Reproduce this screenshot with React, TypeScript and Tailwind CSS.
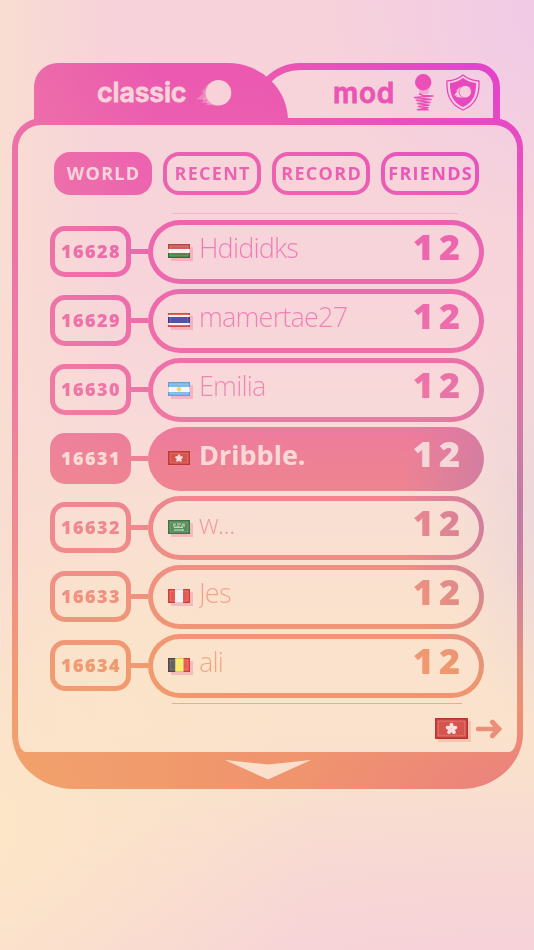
import type { ReactNode } from "react";
import { clsx } from "clsx";

// Both gradients are anchored to the viewport, so every piece of ink lines up with its neighbours.
const PAPER_VARS =
  "[--paper:radial-gradient(ellipse_250px_230px_at_106%_1%,#f0c9e8,#f4cce000),radial-gradient(ellipse_130px_240px_at_108%_54%,#e8d3dc,#f2d8da00),radial-gradient(ellipse_360px_320px_at_-8%_87%,#fde6c6,#fce2cc00),radial-gradient(ellipse_640px_230px_at_100%_106%,#f6d0db,#f7d6d800),linear-gradient(90deg,#f9ddd2,#f9dad400_20%),linear-gradient(180deg,#f7d2da,#f7d4da_30%,#f8d9d9_43%,#f9dfd2_55%,#fae2cc_66%,#fae2cc_76%,#f9dfce_84%,#f8d9d3)]";
const INK_VARS =
  "[--ink:radial-gradient(ellipse_290px_200px_at_102%_6%,#e23ed0,#ea54b400),radial-gradient(ellipse_150px_210px_at_103%_54%,#b97aac,#dc78a000),radial-gradient(ellipse_260px_230px_at_0%_84%,#f2a467,#f0986e00),radial-gradient(ellipse_240px_120px_at_100%_84%,#ea7f80,#ee8e7400),linear-gradient(90deg,#ee8c9c70,#ee809800_30%),linear-gradient(180deg,#eb58b0_6%,#ec62b0_18%,#ed69ad_31%,#ee74a6_42%,#ee8096_48%,#ef888c_55%,#f0937b_63%,#f0986e_70%,#f0946e_81%)]";

const PAPER = "bg-fixed [background-image:var(--paper)]";
const INK = "bg-fixed [background-image:var(--ink)]";
const INK_TEXT = "bg-fixed [background-image:var(--ink)] bg-clip-text text-transparent";
const OUTLINE =
  "border-transparent bg-fixed [background-image:var(--paper),var(--ink)] [background-clip:padding-box,padding-box,padding-box,padding-box,padding-box,padding-box,border-box,border-box,border-box,border-box,border-box,border-box]";

type Country = "hu" | "th" | "ar" | "hk" | "sa" | "pe" | "be";

interface Entry {
  rank: number;
  name: string;
  country: Country;
  score: number;
  me?: boolean;
}

const entries: Entry[] = [
  { rank: 16628, name: "Hdididks", country: "hu", score: 12 },
  { rank: 16629, name: "mamertae27", country: "th", score: 12 },
  { rank: 16630, name: "Emilia", country: "ar", score: 12 },
  { rank: 16631, name: "Dribble.", country: "hk", score: 12, me: true },
  { rank: 16632, name: "w...", country: "sa", score: 12 },
  { rank: 16633, name: "Jes", country: "pe", score: 12 },
  { rank: 16634, name: "ali", country: "be", score: 12 },
];

const filters = ["WORLD", "RECENT", "RECORD", "FRIENDS"];

const flagArt: Record<Country, ReactNode> = {
  hu: (
    <>
      <path fill="#c94f49" d="M0 0h22v5H0z" />
      <path fill="#f8eeee" d="M0 5h22v4H0z" />
      <path fill="#3f7a3a" d="M0 9h22v5H0z" />
    </>
  ),
  th: (
    <>
      <path fill="#e5584c" d="M0 0h22v14H0z" />
      <path fill="#fbeef0" d="M0 2h22v10H0z" />
      <path fill="#413f9c" d="M0 4h22v6H0z" />
    </>
  ),
  ar: (
    <>
      <path fill="#6db4ea" d="M0 0h22v14H0z" />
      <path fill="#f3f5fa" d="M0 5h22v5H0z" />
      <circle cx="11" cy="7.2" r="2.2" fill="#f2d552" />
    </>
  ),
  hk: (
    <>
      <path fill="#d2403a" d="M0 0h22v14H0z" />
      <g fill="#fbdedd">
        <ellipse cx="11" cy="5.1" rx="1.3" ry="1.9" />
        <ellipse cx="11" cy="5.1" rx="1.3" ry="1.9" transform="rotate(72 11 7.2)" />
        <ellipse cx="11" cy="5.1" rx="1.3" ry="1.9" transform="rotate(144 11 7.2)" />
        <ellipse cx="11" cy="5.1" rx="1.3" ry="1.9" transform="rotate(216 11 7.2)" />
        <ellipse cx="11" cy="5.1" rx="1.3" ry="1.9" transform="rotate(288 11 7.2)" />
      </g>
    </>
  ),
  sa: (
    <>
      <path fill="#48804b" d="M0 0h22v14H0z" />
      <path stroke="#c9ddc4" strokeWidth="1" fill="none" d="M5 4.2h3M9 4h4M14 4.2h3M5 6h2.5M8.5 6.2h3M13 6h4M6 7.4h9M6 10h10M14.5 9.3v1.6" />
    </>
  ),
  pe: (
    <>
      <path fill="#e0483f" d="M0 0h22v14H0z" />
      <path fill="#f7efef" d="M7 0h8v14H7z" />
    </>
  ),
  be: (
    <>
      <path fill="#55504d" d="M0 0h7.5v14H0z" />
      <path fill="#f8ec5c" d="M7.5 0h8v14h-8z" />
      <path fill="#e24c44" d="M15.5 0H22v14h-6.5z" />
    </>
  ),
};

function Flag({ country, className }: { country: Country; className: string }) {
  return (
    <svg viewBox="0 0 22 14" preserveAspectRatio="none" className={clsx("block shrink-0", className)}>
      {flagArt[country]}
      <path d="M2 12V2h18v10z" fill="#ffffff" fillOpacity="0.1" stroke="#ffffff" strokeOpacity="0.28" strokeWidth="0.7" />
      <path d="M.4 13.6V.4h21.2v13.2z" fill="none" stroke="#3a1010" strokeOpacity="0.18" strokeWidth="0.8" />
    </svg>
  );
}

function FlyingBall() {
  return (
    <svg width="36" height="28" viewBox="0 0 36 28" fill="#f7d2d9">
      <path opacity=".35" d="M13 4 5 13.500h3.500L0 20.500l8 .3-2.500 3 7 .2-3 2 12.500.800z" />
      <path opacity=".3" d="M13 7 7 15.500l4-.3-5 5.300 6-.3-2 4 12 2z" />
      <circle cx="22.500" cy="13.700" r="12.800" />
    </svg>
  );
}

function SpringBall() {
  return (
    <svg width="20" height="37" viewBox="0 0 20 37" fill="none">
      <path fill="#ea52b6" opacity=".3" d="M4 13h12l-2 7H6z" />
      <circle cx="9.200" cy="8.300" r="8.200" fill="#ea50b7" />
      <path
        stroke="#ea50b7"
        strokeWidth="1.500"
        strokeLinejoin="round"
        d="M5 19.800 9 21.500 19 22 .5 23.500l16.500 2L2.500 26.300 16 28.500 3.500 29.500 15 31.200 4.500 32.500 14 33.700 3.500 35.800h11"
      />
    </svg>
  );
}

function ShieldBall() {
  return (
    <svg width="34" height="37" viewBox="0 0 34 37">
      <path fill="none" stroke="#e748bd" strokeWidth="1.300" d="M17 1C13 4.500 7 6.500 1 7c-.6 13 2.500 23.500 16 29C30.500 30.500 33.600 20 33 7 27 6.500 21 4.500 17 1Z" />
      <path fill="#e748bd" d="M17 4C13 7 8.500 8.500 4 9c-.3 11.500 3 19.500 13 24 10-4.500 13.300-12.500 13-24-4.500-.5-9-2-13-5Z" />
      <path fill="#f5cddb" d="m14 13-4 4 1.500 0L8 21.500l3 0-1 1.500 9 1z" />
      <circle cx="19.200" cy="17.700" r="6.200" fill="#f5cddb" stroke="#e748bd" strokeWidth=".7" />
    </svg>
  );
}

function Tabs() {
  return (
    <div className="flex h-[54.5px] pl-[22px]">
      <button
        className={clsx(
          "relative z-10 flex h-[60px] w-[254px] items-start rounded-tl-[24px] [border-top-right-radius:60px_58px] pt-[15px] pl-[63px]",
          INK,
        )}
      >
        <span className="w-[99px] pt-px text-left font-['Inter'] text-[27px] leading-[28px] font-semibold tracking-[-0.2px] text-[#f7d2d9] [-webkit-text-stroke:0.8px_#f7d2d9]">
          classic
        </span>
        <span className="pt-px">
          <FlyingBall />
        </span>
      </button>
      <button
        className={clsx(
          "-ml-[36px] flex h-[56px] w-[248px] items-start rounded-tl-[48px] rounded-tr-[24px] border-[7px] border-b-0 pt-[4px] pl-[74px]",
          OUTLINE,
        )}
      >
        <span className="w-[81px] pt-[5px] text-left font-['Inter'] text-[28px] leading-[28px] font-semibold tracking-[0.8px] text-[#ea55b3] [-webkit-text-stroke:0.8px_#ea55b3]">
          mod
        </span>
        <SpringBall />
        <span className="ml-[12px]">
          <ShieldBall />
        </span>
      </button>
    </div>
  );
}

function Row({ entry }: { entry: Entry }) {
  const { me } = entry;
  return (
    <li className="flex h-[63.500px] items-center">
      <div
        className={clsx(
          "flex h-[51px] w-[81px] items-center justify-center rounded-[15px] border-[5px]",
          me ? clsx("border-transparent bg-origin-border", INK) : OUTLINE,
        )}
      >
        <span
          className={clsx(
            "-mr-px pb-px font-['Open_Sans'] text-[18px] leading-6 font-extrabold tracking-[1.5px]",
            me ? "text-[#f9dad4]" : INK_TEXT,
          )}
        >
          {entry.rank}
        </span>
      </div>
      <div className={clsx("h-[5px] w-[17px]", INK)} />
      <div
        className={clsx(
          "flex h-full w-[336px] items-center rounded-full border-[5.500px] pr-[14px] pl-[15px]",
          me ? clsx("border-transparent", INK) : OUTLINE,
        )}
      >
        <Flag country={entry.country} className="-mt-[2px] h-[14px] w-[22px] shadow-[3px_3px_0_#f07fa066]" />
        <span
          className={clsx(
            "ml-[9px] flex-1 pb-[8px] font-['Open_Sans'] text-[27px] leading-[34px]",
            me ? "font-bold text-[#f9d9d8]" : clsx("font-light tracking-[-0.8px] opacity-80", INK_TEXT),
          )}
        >
          {entry.name}
        </span>
        <span
          className={clsx(
            "pb-[9px] font-['Open_Sans'] text-[36px] leading-[40px] font-extrabold tracking-[5px]",
            me ? "text-[#f4d8d9]" : INK_TEXT,
          )}
        >
          {entry.score}
        </span>
      </div>
    </li>
  );
}

export default function App() {
  return (
    <main className={clsx("h-[950px] w-[534px] overflow-hidden pt-[63px] pr-[11px] pl-[12px]", PAPER_VARS, INK_VARS, PAPER)}>
      <Tabs />
      <section
        className={clsx(
          "relative flex h-[671px] flex-col rounded-t-[30px] px-[6px] pt-[7.500px] [border-bottom-left-radius:62px_56px] [border-bottom-right-radius:62px_56px]",
          INK,
        )}
      >
        <div
          className={clsx(
            "flex h-[627px] flex-col rounded-t-[23px] pt-[27px] [border-bottom-left-radius:8px_16px] [border-bottom-right-radius:8px_16px]",
            PAPER,
          )}
        >
          <nav className="flex gap-[11px] pl-[36px]">
            {filters.map((label, i) => (
              <button
                key={label}
                className={clsx(
                  "flex h-[43px] w-[98px] items-center justify-center rounded-[16px] border-4 font-['Open_Sans'] text-[18px] leading-6 font-bold tracking-[1.3px]",
                  i === 0 ? clsx("border-transparent text-[#f7d3da]", INK) : OUTLINE,
                )}
              >
                <span className={clsx("-mr-[1.3px] pb-px", i > 0 && INK_TEXT)}>{label}</span>
              </button>
            ))}
          </nav>

          {/* edges of the rows scrolled out of view */}
          <div className="mt-[18px] ml-[154px] h-px w-[286px] bg-[#ed66b0]/30" />
          <ul className="mt-[6px] ml-[32px] flex flex-col gap-[5.500px]">
            {entries.map((entry) => (
              <Row key={entry.rank} entry={entry} />
            ))}
          </ul>
          <div className="mt-[5px] ml-[154px] h-[1.500px] w-[290px] bg-[#ef9070]/70" />

          <div className="mt-[14px] flex items-center pl-[417px]">
            <Flag country="hk" className="h-[21px] w-[33px] shadow-[3px_3px_0_#f08f7c55]" />
            <svg width="28" height="20" viewBox="0 0 28 20" className="ml-[7px]">
              <path d="M3 10h17" fill="none" stroke="#ec8f78" strokeWidth="4.500" strokeLinecap="round" />
              <path d="m17.500 3.200 6.300 6.800-6.300 6.800" fill="none" stroke="#ec8f78" strokeWidth="5" strokeLinecap="round" />
            </svg>
          </div>
        </div>

        <button className="flex h-[36px] items-start justify-center pt-[8px]">
          <svg width="86" height="20" viewBox="0 0 86 20">
            <path fill="#fae0cc" d="M0 0 43 4.500 86 0 43 19.500z" />
          </svg>
        </button>
      </section>
    </main>
  );
}
